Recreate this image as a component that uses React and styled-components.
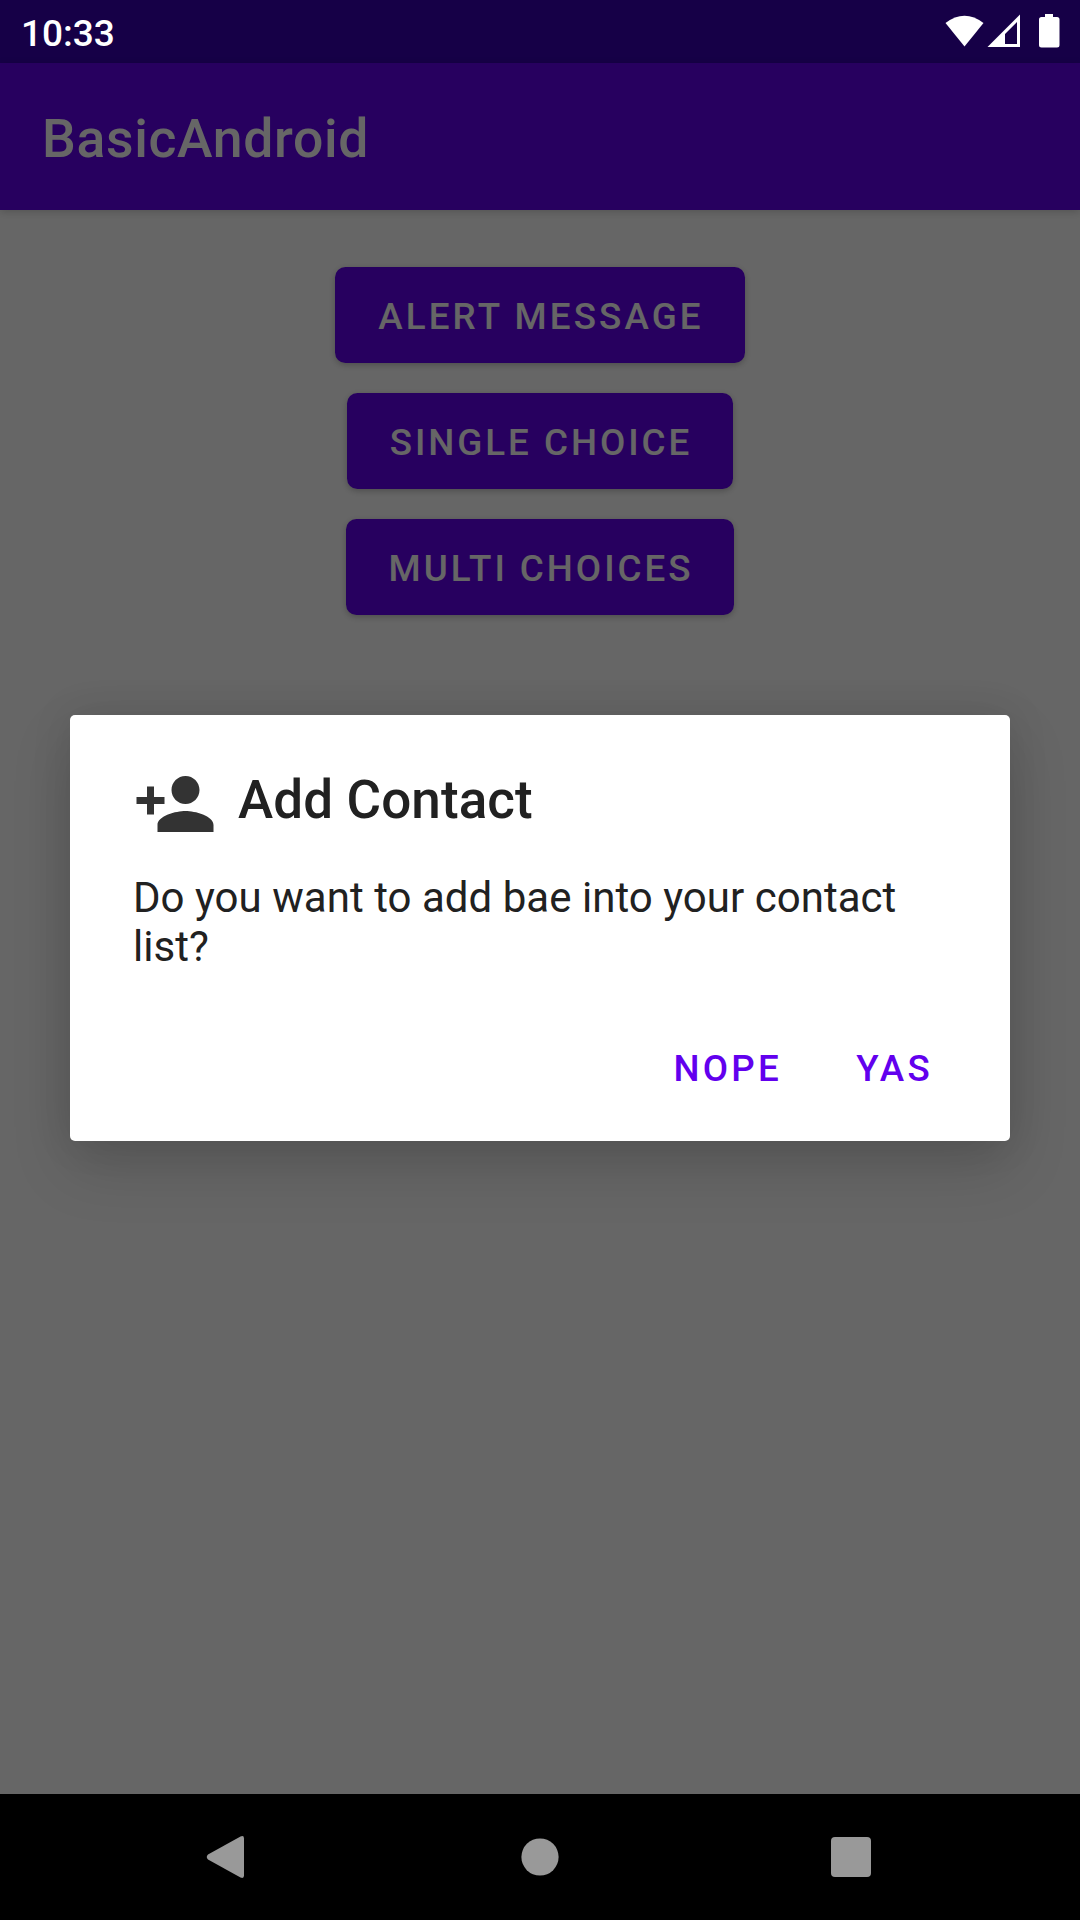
import React from 'react';
import styled, { createGlobalStyle } from 'styled-components';

const GlobalStyle = createGlobalStyle`
  * { box-sizing: border-box; }
  body {
    margin: 0;
    background: #000;
    font-family: Roboto, 'Noto Sans', sans-serif;
  }
`;

const Screen = styled.div`
  width: 1080px;
  height: 1920px;
  display: flex;
  flex-direction: column;
  overflow: hidden;
`;

const StatusBar = styled.header`
  height: 63px;
  flex: none;
  display: flex;
  align-items: center;
  justify-content: space-between;
  padding: 3px 20px 0 21px;
  background: #160047;
  color: #fff;
`;

const Clock = styled.time`
  padding-top: 1px;
  font-size: 37px;
  font-weight: 500;
  line-height: 44px;
`;

const StatusIcons = styled.svg`
  display: block;
  width: 118px;
  height: 40px;
`;

const AppWindow = styled.div`
  position: relative;
  flex: 1;
  display: flex;
  flex-direction: column;
  background: #fff;
`;

const AppBar = styled.div`
  height: 147px;
  flex: none;
  display: flex;
  align-items: center;
  padding: 4px 42px 0;
  background: #6200ee;
  color: #fff;
  box-shadow: 0 2px 8px rgba(0, 0, 0, 0.18);
`;

const AppTitle = styled.h1`
  margin: 0;
  font-size: 53.5px;
  font-weight: 500;
  line-height: 62px;
  letter-spacing: 0.68px;
`;

const ButtonColumn = styled.main`
  display: flex;
  flex-direction: column;
  align-items: center;
  gap: 30px;
  padding-top: 57px;
`;

const ContainedButton = styled.button`
  height: 96px;
  padding: 3px 41px 0 43px;
  border: 0;
  border-radius: 10.5px;
  background: #6200ee;
  color: #fff;
  font: 500 36.75px/43px Roboto, sans-serif;
  letter-spacing: ${({ $tracking }) => $tracking}px;
  text-transform: uppercase;
  white-space: nowrap;
  box-shadow: 0 2px 6px rgba(0, 0, 0, 0.25);
`;

const Scrim = styled.div`
  position: absolute;
  inset: 0;
  display: flex;
  align-items: center;
  justify-content: center;
  padding-bottom: 1px;
  background: rgba(0, 0, 0, 0.6);
`;

const Dialog = styled.section`
  width: 940px;
  height: 426px;
  display: flex;
  flex-direction: column;
  padding: 47px 63px 26px;
  border-radius: 5px;
  background: #fff;
  color: #212121;
  box-shadow: 0 26px 60px rgba(0, 0, 0, 0.15), 0 0 40px rgba(0, 0, 0, 0.1);
`;

const DialogHeader = styled.div`
  height: 84px;
  display: flex;
  align-items: flex-start;
  gap: 21px;
`;

const ContactIcon = styled.svg`
  width: 84px;
  height: 84px;
  flex: none;
  fill: #333;
`;

const DialogTitle = styled.h2`
  margin: 0;
  padding-top: 7px;
  font-size: 53px;
  font-weight: 500;
  line-height: 62px;
  letter-spacing: 0.1px;
`;

const Message = styled.p`
  margin: 27px 0 0;
  font-size: 42px;
  line-height: 49px;
  letter-spacing: 0.03px;
`;

const Actions = styled.div`
  margin: auto -7px 0 0;
  display: flex;
  justify-content: flex-end;
  gap: 32px;
`;

const TextButton = styled.button`
  height: 96px;
  padding: 3px 21px 0;
  border: 0;
  background: none;
  color: #6200ee;
  font: 500 36.75px/43px Roboto, sans-serif;
  letter-spacing: 0.0893em;
  text-transform: uppercase;
`;

const NavBar = styled.nav`
  height: 126px;
  flex: none;
  display: flex;
  align-items: center;
  justify-content: space-between;
  padding: 0 187px;
  background: #000;
`;

const NavIcon = styled.svg`
  display: block;
  width: 84px;
  height: 84px;
  fill: #999;
`;

const choices = [
  { label: 'Alert message', tracking: 3.12 },
  { label: 'Single choice', tracking: 2.97 },
  { label: 'Multi choices', tracking: 2.97 },
];

export default function App() {
  return (
    <>
      <GlobalStyle />
      <Screen>
        <StatusBar>
          <Clock>10:33</Clock>
          <StatusIcons viewBox="0 0 118 40" fill="#fff">
            <path d="M3.5 10Q22.5-4.500 41.500 10L22.500 33.500Z" />
            <path fillRule="evenodd" d="M78 1.500V34H45.500ZM75 9L63 21V31H75Z" />
            <path d="M103 1h8v3h4a2.500 2.500 0 0 1 2.500 2.500V32a2.500 2.500 0 0 1-2.500 2.500H99.500A2.500 2.500 0 0 1 97 32V6.500A2.500 2.500 0 0 1 99.500 4h3.500z" />
          </StatusIcons>
        </StatusBar>
        <AppWindow>
          <AppBar>
            <AppTitle>BasicAndroid</AppTitle>
          </AppBar>
          <ButtonColumn>
            {choices.map(({ label, tracking }) => (
              <ContainedButton key={label} $tracking={tracking}>
                {label}
              </ContainedButton>
            ))}
          </ButtonColumn>
          <Scrim>
            <Dialog role="dialog">
              <DialogHeader>
                <ContactIcon viewBox="0 0 24 24">
                  <path d="M15 12c2.210 0 4-1.790 4-4s-1.790-4-4-4-4 1.790-4 4 1.790 4 4 4zm-9-2V7H4v3H1v2h3v3h2v-3h3v-2H6zm9 4c-2.670 0-8 1.340-8 4v2h16v-2c0-2.660-5.330-4-8-4z" />
                </ContactIcon>
                <DialogTitle>Add Contact</DialogTitle>
              </DialogHeader>
              <Message>Do you want to add bae into your contact list?</Message>
              <Actions>
                <TextButton>Nope</TextButton>
                <TextButton>Yas</TextButton>
              </Actions>
            </Dialog>
          </Scrim>
        </AppWindow>
        <NavBar>
          <NavIcon viewBox="0 0 84 84">
            <path d="M21 39.500 53.500 21.500Q57 20 57 23.500V60.500Q57 64 53.500 62.500L21 44.500Q18.500 42 21 39.500Z" />
          </NavIcon>
          <NavIcon viewBox="0 0 84 84">
            <circle cx="42" cy="42" r="18.600" />
          </NavIcon>
          <NavIcon viewBox="0 0 84 84">
            <rect x="22" y="22" width="40" height="40" rx="4" />
          </NavIcon>
        </NavBar>
      </Screen>
    </>
  );
}
